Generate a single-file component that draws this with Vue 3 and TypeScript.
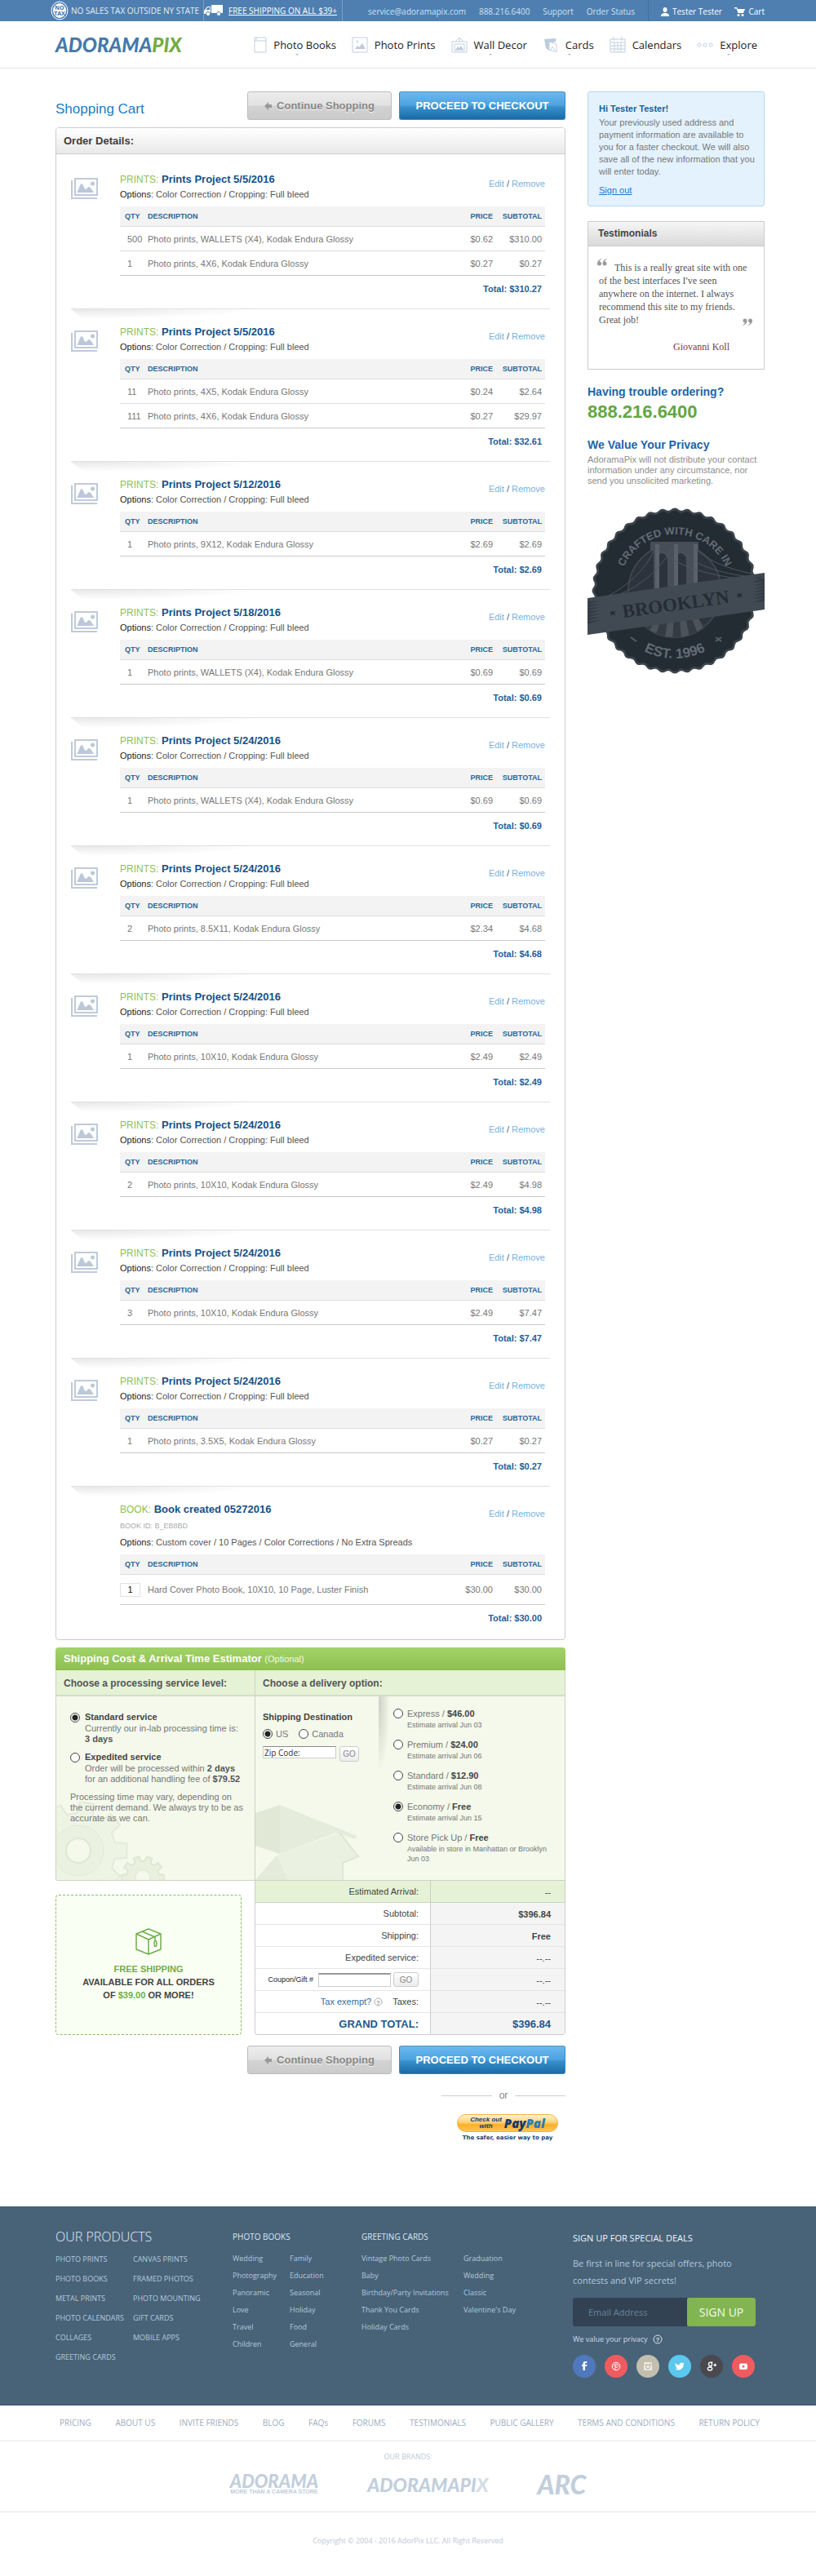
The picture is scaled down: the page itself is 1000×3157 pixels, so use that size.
<script setup lang="ts">
import { ref } from 'vue'

interface Row { qty: string; desc: string; price: string; sub: string }
interface Item { kind: string; title: string; id?: string; options: string; rows: Row[]; total: string }

const bleed = 'Color Correction / Cropping: Full bleed'
const print = (date: string, rows: [string, string, string, string][], total: string): Item => ({
  kind: 'PRINTS:',
  title: `Prints Project ${date}`,
  options: bleed,
  rows: rows.map(([qty, size, price, sub]) => ({ qty, desc: `Photo prints, ${size}, Kodak Endura Glossy`, price, sub })),
  total,
})

const items: Item[] = [
  print('5/5/2016', [['500', 'WALLETS (X4)', '$0.62', '$310.00'], ['1', '4X6', '$0.27', '$0.27']], '$310.27'),
  print('5/5/2016', [['11', '4X5', '$0.24', '$2.64'], ['111', '4X6', '$0.27', '$29.97']], '$32.61'),
  print('5/12/2016', [['1', '9X12', '$2.69', '$2.69']], '$2.69'),
  print('5/18/2016', [['1', 'WALLETS (X4)', '$0.69', '$0.69']], '$0.69'),
  print('5/24/2016', [['1', 'WALLETS (X4)', '$0.69', '$0.69']], '$0.69'),
  print('5/24/2016', [['2', '8.5X11', '$2.34', '$4.68']], '$4.68'),
  print('5/24/2016', [['1', '10X10', '$2.49', '$2.49']], '$2.49'),
  print('5/24/2016', [['2', '10X10', '$2.49', '$4.98']], '$4.98'),
  print('5/24/2016', [['3', '10X10', '$2.49', '$7.47']], '$7.47'),
  print('5/24/2016', [['1', '3.5X5', '$0.27', '$0.27']], '$0.27'),
  {
    kind: 'BOOK:',
    title: 'Book created 05272016',
    id: 'BOOK ID: B_EB8BD',
    options: 'Custom cover / 10 Pages / Color Corrections / No Extra Spreads',
    rows: [{ qty: '1', desc: 'Hard Cover Photo Book, 10X10, 10 Page, Luster Finish', price: '$30.00', sub: '$30.00' }],
    total: '$30.00',
  },
]

const delivery = [
  { name: 'Express', price: '$46.00', note: 'Estimate arrival Jun 03' },
  { name: 'Premium', price: '$24.00', note: 'Estimate arrival Jun 06' },
  { name: 'Standard', price: '$12.90', note: 'Estimate arrival Jun 08' },
  { name: 'Economy', price: 'Free', note: 'Estimate arrival Jun 15' },
  { name: 'Store Pick Up', price: 'Free', note: 'Available in store in Manhattan or Brooklyn Jun 03' },
]
const chosenDelivery = ref('Economy')
const service = ref('standard')
const country = ref('US')
const zip = ref('Zip Code:')
const coupon = ref('')
const email = ref('')

const products = [
  ['PHOTO PRINTS', 'PHOTO BOOKS', 'METAL PRINTS', 'PHOTO CALENDARS', 'COLLAGES', 'GREETING CARDS'],
  ['CANVAS PRINTS', 'FRAMED PHOTOS', 'PHOTO MOUNTING', 'GIFT CARDS', 'MOBILE APPS'],
]
const books = [
  ['Wedding', 'Photography', 'Panoramic', 'Love', 'Travel', 'Children'],
  ['Family', 'Education', 'Seasonal', 'Holiday', 'Food', 'General'],
]
const cards = [
  ['Vintage Photo Cards', 'Baby', 'Birthday/Party Invitations', 'Thank You Cards', 'Holiday Cards'],
  ['Graduation', 'Wedding', 'Classic', "Valentine's Day"],
]
const siteLinks = ['PRICING', 'ABOUT US', 'INVITE FRIENDS', 'BLOG', 'FAQs', 'FORUMS', 'TESTIMONIALS', 'PUBLIC GALLERY', 'TERMS AND CONDITIONS', 'RETURN POLICY']

/* Wavy outline of the round seal. */
function wavyCircle(cx: number, cy: number, r: number, depth: number, waves: number): string {
  const pts: string[] = []
  const steps = waves * 10
  for (let i = 0; i < steps; i++) {
    const a = (i / steps) * Math.PI * 2
    const rr = r + depth * Math.cos(a * waves)
    pts.push(`${(cx + rr * Math.cos(a)).toFixed(1)},${(cy + rr * Math.sin(a)).toFixed(1)}`)
  }
  return `M${pts.join('L')}Z`
}
const sealOuter = wavyCircle(107, 102, 100, 1.5, 40)
const sealInner = wavyCircle(107, 102, 97, 1.5, 40)

/* Toothed wheel outline. */
function gear(cx: number, cy: number, r: number, tooth: number, teeth: number): string {
  const pts: string[] = []
  for (let i = 0; i < teeth; i++) {
    const a = (i / teeth) * Math.PI * 2
    const w = Math.PI / teeth
    const marks: [number, number][] = [[-0.62, r], [-0.42, r + tooth], [0.42, r + tooth], [0.62, r]]
    for (const [k, rr] of marks) {
      pts.push(`${(cx + rr * Math.cos(a + k * w)).toFixed(1)},${(cy + rr * Math.sin(a + k * w)).toFixed(1)}`)
    }
  }
  return `M${pts.join('L')}Z`
}
const bigGear = gear(27, 60, 46, 14, 9)
const smallGear = gear(106, 93, 20, 6, 10)
</script>

<template>
  <div class="page">
    <div class="topbar">
      <div class="wrap topbar-in">
        <div class="promo-tax">
          <svg width="22" height="24" viewBox="0 0 22 24">
            <ellipse cx="11" cy="12" rx="10" ry="11" fill="none" stroke="#fff" stroke-width="1" />
            <ellipse cx="11" cy="12" rx="8" ry="9" fill="#fff" />
            <text x="11" y="11" class="tax">NO</text>
            <text x="11" y="18" class="tax">TAX</text>
          </svg>
          <span>NO SALES TAX OUTSIDE NY STATE</span>
        </div>
        <div class="promo-ship">
          <svg width="24" height="14" viewBox="0 0 24 14" fill="#fff">
            <path d="M9 0h14v10H9zM1 6l3-4h4v9H0V7z" />
            <path d="M2.500 6l2-3H7v3z" fill="#4e7fb0" />
            <circle cx="5" cy="11" r="2.500" stroke="#4e7fb0" /><circle cx="18" cy="11" r="2.500" stroke="#4e7fb0" />
          </svg>
          <a href="#">FREE SHIPPING ON ALL $39+</a>
        </div>
        <div class="contact">
          <a href="#">service@adoramapix.com</a><a href="#">888.216.6400</a><a href="#">Support</a><a href="#">Order Status</a>
        </div>
        <div class="account">
          <a href="#"><svg width="10" height="11" viewBox="0 0 10 11" fill="#fff"><ellipse cx="5" cy="3" rx="2.500" ry="3" /><path d="M0 11V9l3-2h4l3 2v2z" /></svg>Tester Tester</a>
          <a href="#"><svg width="13" height="11" viewBox="0 0 13 11" fill="#fff"><path d="M0 0h3l1 2h9l-2 5H4.500L2.500 1.500H0z" /><circle cx="5" cy="9.500" r="1.500" /><circle cx="10" cy="9.500" r="1.500" /></svg>Cart</a>
        </div>
      </div>
    </div>

    <header class="head">
      <div class="wrap head-in">
        <a href="#" class="logo">ADORAMA<span>PIX</span></a>
        <nav class="nav">
          <a href="#" class="drop"><svg class="ni nbook" viewBox="0 0 16 20"><path d="M1 1h14v18H1zM1 5h14M3 1v4" /></svg>Photo Books</a>
          <a href="#"><svg class="ni" viewBox="0 0 20 20"><path d="M1 1h18v18H1z" /><path d="M4 15l3-4 2 2 4-5 4 7z" fill="#bccbdd" stroke="none" /><circle cx="7" cy="6" r="1" /></svg>Photo Prints</a>
          <a href="#" class="drop"><svg class="ni" viewBox="0 0 20 20"><path d="M1 6h18v13H1zM4 9h12v8H4zM5 6l5-5 5 5M10 1v5" /><path d="M5 16l3-4 2 2 2-3 3 5z" fill="#bccbdd" stroke="none" /></svg>Wall Decor</a>
          <a href="#" class="drop"><svg class="ni" viewBox="0 0 20 20"><path d="M2 3l14-1v4L8 8v9l-4-3z" fill="#bccbdd" stroke="none" /><path d="M8 6l9 3v10l-9-3zM10 16l2-4 3 5" fill="#fff" /></svg>Cards</a>
          <a href="#"><svg class="ni" viewBox="0 0 20 20"><path d="M1 3h18v16H1zM1 7h18M1 11h18M1 15h18M6 7v12M10 7v12M14 7v12M5 0v5M15 0v5" /></svg>Calendars</a>
          <a href="#" class="drop"><svg class="ni" viewBox="0 0 20 20"><circle cx="3" cy="10" r="2" /><circle cx="10" cy="10" r="2" /><circle cx="17" cy="10" r="2" /></svg>Explore</a>
        </nav>
      </div>
    </header>

    <main class="wrap body">
      <div class="col-main">
        <div class="title-row">
          <h1>Shopping Cart</h1>
          <div class="actions">
            <button class="btn grey" type="button"><svg width="9" height="10" viewBox="0 0 9 10" fill="#999"><path d="M0 5l5-5v3h4v4H5v3z" /></svg>Continue Shopping</button>
            <button class="btn blue" type="button">PROCEED TO CHECKOUT</button>
          </div>
        </div>

        <section class="order">
          <h2>Order Details:</h2>
          <article v-for="(it, i) in items" :key="i" class="item" :class="{ first: i === 0 }">
            <div class="thumb">
              <svg v-if="!it.id" width="33" height="26" viewBox="0 0 33 26">
                <path d="M1 3v22h31" fill="none" stroke="#c0cada" stroke-width="2" />
                <rect x="5" y="1" width="27" height="20" fill="#fff" stroke="#c0cada" stroke-width="2" />
                <path d="M7 18c2-2 4-11 6-11s3 7 5 7 2-3 4-3 4 4 6 7z" fill="#bcc8d8" />
                <circle cx="26.500" cy="7" r="2.500" fill="#bcc8d8" />
              </svg>
            </div>
            <div class="detail">
              <div class="detail-head">
                <div>
                  <h3><span>{{ it.kind }}</span> {{ it.title }}</h3>
                  <p v-if="it.id" class="bid">{{ it.id }}</p>
                  <p class="opts"><b>Options</b>: {{ it.options }}</p>
                </div>
                <div class="links"><a href="#">Edit</a> / <a href="#">Remove</a></div>
              </div>
              <table class="lines">
                <thead><tr><th class="q">QTY</th><th>DESCRIPTION</th><th class="n">PRICE</th><th class="s">SUBTOTAL</th></tr></thead>
                <tbody>
                  <tr v-for="(r, j) in it.rows" :key="j" :class="{ tall: it.id }">
                    <td class="q"><input v-if="it.id" class="qty" :value="r.qty" aria-label="Quantity"><template v-else>{{ r.qty }}</template></td>
                    <td>{{ r.desc }}</td><td class="n">{{ r.price }}</td><td class="s">{{ r.sub }}</td>
                  </tr>
                </tbody>
              </table>
              <p class="total">Total: {{ it.total }}</p>
            </div>
          </article>
        </section>

        <section class="est">
          <h2>Shipping Cost &amp; Arrival Time Estimator <small>(Optional)</small></h2>
          <div class="est-grid">
            <div class="est-left">
              <h3>Choose a processing service level:</h3>
              <div class="svc">
                <svg class="deco" width="134" height="96" viewBox="0 0 134 96">
                  <path :d="bigGear" fill="#eef4e4" stroke="#e3eada" stroke-width="2" />
                  <circle cx="27" cy="60" r="31" fill="#eaf1e0" stroke="#e1e9d6" /><circle cx="27" cy="60" r="15" fill="#f4f9eb" stroke="#dfe7d4" stroke-width="2" />
                  <path :d="smallGear" fill="#e9f0de" stroke="#dfe7d4" stroke-width="2" /><circle cx="106" cy="93" r="9" fill="#f4f9eb" stroke="#dfe7d4" />
                </svg>
                <div class="choice">
                  <input id="std" v-model="service" type="radio" name="service" value="standard">
                  <div><label for="std">Standard service</label><p>Currently our in-lab processing time is:<br><b>3 days</b></p></div>
                </div>
                <div class="choice">
                  <input id="exp" v-model="service" type="radio" name="service" value="expedited">
                  <div><label for="exp">Expedited service</label><p>Order will be processed within <b>2 days</b><br>for an additional handling fee of <b>$79.52</b></p></div>
                </div>
                <p class="note">Processing time may vary, depending on<br>the current demand. We always try to be as<br>accurate as we can.</p>
              </div>
            </div>
            <div class="est-right">
              <h3>Choose a delivery option:</h3>
              <div class="del">
                <div class="dest">
                  <svg class="deco" width="128" height="92" viewBox="0 0 128 92">
                    <path d="M0 10L30 0l95 38-4 4-22-8-68 26L0 50z" fill="#e6ecdc" />
                    <path d="M0 10L30 0v60L0 50z" fill="#e1e8d6" />
                    <path d="M26 62l77-28 23 29-19 8v21H0z" fill="#ebf1e1" />
                    <path d="M103 34l23 29-19 8v21" fill="none" stroke="#dfe6d4" stroke-width="2" />
                    <path d="M26 62L0 92h40z" fill="#e5ebda" />
                  </svg>
                  <h4>Shipping Destination</h4>
                  <div class="ctry">
                    <label><input v-model="country" type="radio" name="country" value="US">US</label>
                    <label><input v-model="country" type="radio" name="country" value="Canada">Canada</label>
                  </div>
                  <div class="zip"><input v-model="zip" type="text" aria-label="Zip code"><button type="button" class="go">GO</button></div>
                </div>
                <div class="opts-list">
                  <div v-for="d in delivery" :key="d.name" class="dopt">
                    <input :id="'d-' + d.name" v-model="chosenDelivery" type="radio" name="delivery" :value="d.name">
                    <div><label :for="'d-' + d.name">{{ d.name }} / <b>{{ d.price }}</b></label><p>{{ d.note }}</p></div>
                  </div>
                </div>
              </div>
            </div>
          </div>
        </section>

        <div class="sum-row">
          <aside class="free">
            <svg width="32" height="33" viewBox="0 0 32 33" fill="none" stroke="#6fae4a" stroke-width="1.500" stroke-linejoin="round">
              <path d="M16 1l15 6v19l-15 6L1 26V7zM1 7l15 7 15-7M16 14v18M8 4l16 7v4" /><ellipse cx="24.500" cy="19" rx="1.500" ry="3.500" />
            </svg>
            <p><em>FREE SHIPPING</em><br>AVAILABLE FOR ALL ORDERS<br>OF <em>$39.00</em> OR MORE!</p>
          </aside>
          <table class="sum">
            <tbody>
              <tr class="arr"><th>Estimated Arrival:</th><td>--</td></tr>
              <tr><th>Subtotal:</th><td><b>$396.84</b></td></tr>
              <tr><th>Shipping:</th><td><b>Free</b></td></tr>
              <tr><th>Expedited service:</th><td>--.--</td></tr>
              <tr><th><div class="coupon"><label for="coupon">Coupon/Gift #</label><input id="coupon" v-model="coupon" type="text"><button type="button" class="go">GO</button></div></th><td>--.--</td></tr>
              <tr><th><div class="tax-row"><a href="#">Tax exempt?</a><svg width="11" height="11" viewBox="0 0 11 11"><circle cx="5.500" cy="5.500" r="4.500" fill="none" stroke="#aaa" /><text x="5.500" y="8.500" class="qm">?</text></svg><span>Taxes:</span></div></th><td>--.--</td></tr>
              <tr class="grand"><th>GRAND TOTAL:</th><td>$396.84</td></tr>
            </tbody>
          </table>
        </div>

        <div class="actions bottom">
          <button class="btn grey" type="button"><svg width="9" height="10" viewBox="0 0 9 10" fill="#999"><path d="M0 5l5-5v3h4v4H5v3z" /></svg>Continue Shopping</button>
          <button class="btn blue" type="button">PROCEED TO CHECKOUT</button>
        </div>
        <div class="or"><span>or</span></div>
        <div class="pp">
          <button type="button"><span class="co">Check out<br>with</span><span class="pal"><i>Pay</i><i class="l">Pal</i></span></button>
          <small>The safer, easier way to pay</small>
        </div>
      </div>

      <aside class="side">
        <section class="hello">
          <h3>Hi Tester Tester!</h3>
          <p>Your previously used address and payment information are available to you for a faster checkout. We will also save all of the new information that you will enter today.</p>
          <a href="#">Sign out</a>
        </section>
        <section class="testi">
          <h3>Testimonials</h3>
          <blockquote>
            <svg class="lq" width="12" height="9" viewBox="0 0 12 9"><path d="M5 0C2 1 0 3 0 6a2.500 2.500 0 1 0 2.500-2.500C3 2 4 1 5.300.7zM11.500 0c-3 1-5 3-5 6A2.500 2.500 0 1 0 9 3.500c.5-1.500 1.500-2.500 2.800-2.800z" /></svg>
            This is a really great site with one of the best interfaces I've seen anywhere on the internet. I always recommend this site to my friends. Great job!
            <svg class="rq" width="12" height="9" viewBox="0 0 12 9"><path d="M.5 9c3-1 5-3 5-6A2.500 2.500 0 1 0 3 5.500C2.500 7 1.500 8 .2 8.300zM7 9c3-1 5-3 5-6a2.500 2.500 0 1 0-2.500 2.500C9 7 8 8 6.700 8.300z" /></svg>
          </blockquote>
          <cite>Giovanni Koll</cite>
        </section>
        <h3 class="sh">Having trouble ordering?</h3>
        <p class="phone">888.216.6400</p>
        <h3 class="sh">We Value Your Privacy</h3>
        <p class="priv">AdoramaPix will not distribute your contact information under any circumstance, nor send you unsolicited marketing.</p>
        <svg class="seal" viewBox="0 0 217 204">
          <defs>
            <path id="arcTop" d="M38 102a69 69 0 0 1 138 0" />
            <path id="arcBot" d="M24 102a83 83 0 0 0 166 0" />
            <clipPath id="disc"><circle cx="107" cy="102" r="57" /></clipPath>
          </defs>
          <path :d="sealOuter" fill="#3c444c" /><path :d="sealInner" fill="#232b33" />
          <circle cx="107" cy="102" r="57" fill="#2c333c" stroke="#3d454e" stroke-width="2" />
          <g clip-path="url(#disc)">
            <path d="M48 160l34-26h50l34 26z" fill="#343b43" />
            <path d="M84 134l-14 30h11l10-30zM99 134l-5 30h10l2-30zM113 134l2 30h11l-6-30zM127 134l12 30h11l-15-30z" fill="#4d535a" />
          </g>
          <path d="M77 42h59v11h-3v52h-12V66c0-7-3-10-7-10s-7 4-7 10v39H98V66c0-7-3-10-7-10s-6 4-6 10v39h-4V53h-4z" fill="#474e57" />
          <path d="M83 45h5v60h-5zM106 45h5v60h-5zM130 45h5v60h-5z" fill="#59616a" />
          <path d="M86 49c20 22 60 35 117 40M109 49c18 20 52 32 92 36M131 49c18 18 42 26 70 32M82 52C70 78 48 96 26 108M104 50C84 82 62 98 30 110" fill="none" stroke="#4e565f" />
          <text class="arc"><textPath href="#arcTop" startOffset="50%">CRAFTED WITH CARE IN</textPath></text>
          <text class="arc year"><textPath href="#arcBot" startOffset="50%">EST. 1996</textPath></text>
          <path d="M53 159l7 5M164 164l-7 -5M164 159l-7 5" stroke="#565f69" stroke-width="2" stroke-dasharray="9 9 0 9" />
          <path d="M0 111L217 80v45L0 156z" fill="#414a53" />
          <path d="M0 115l16-1-16 5 16-1-16 5 16-1-16 5 16-1-16 5 16-1-16 5 16-1-16 5 16-1-16 5zM217 87l-14 0 14-4-14 9 14-1-14 5 14-1-14 5 14-1-14 5 14-1-14 5 14-1-14 5 14-1-14 5 14-1z" fill="#343c45" />
          <g transform="rotate(-8 108 118)">
            <text x="108" y="126" class="bk">BROOKLYN</text>
            <path d="M30 115l1 2 3 0-2 2 1 3-3-2-3 2 1-3-2-2 3 0zM187 115l1 2 3 0-2 2 1 3-3-2-3 2 1-3-2-2 3 0z" fill="#252c34" />
          </g>
        </svg>
      </aside>
    </main>

    <footer>
      <div class="foot">
        <div class="wrap foot-in">
          <section class="f-prod">
            <h3>OUR PRODUCTS</h3>
            <div class="lists"><ul v-for="(c, i) in products" :key="i"><li v-for="l in c" :key="l"><a href="#">{{ l }}</a></li></ul></div>
          </section>
          <section class="f-book">
            <h3>PHOTO BOOKS</h3>
            <div class="lists"><ul v-for="(c, i) in books" :key="i"><li v-for="l in c" :key="l"><a href="#">{{ l }}</a></li></ul></div>
          </section>
          <section class="f-card">
            <h3>GREETING CARDS</h3>
            <div class="lists"><ul v-for="(c, i) in cards" :key="i"><li v-for="l in c" :key="l"><a href="#">{{ l }}</a></li></ul></div>
          </section>
          <section class="f-sign">
            <h3>SIGN UP FOR SPECIAL DEALS</h3>
            <p>Be first in line for special offers, photo<br>contests and VIP secrets!</p>
            <form @submit.prevent><input v-model="email" type="email" placeholder="Email Address" aria-label="Email Address"><button type="submit">SIGN UP</button></form>
            <div class="fp">We value your privacy <svg width="12" height="12" viewBox="0 0 12 12"><circle cx="6" cy="6" r="5" fill="none" stroke="#dbe6f0" /><text x="6" y="9" class="qm lite">?</text></svg></div>
            <div class="soc">
              <a href="#" aria-label="Facebook" class="fb"><svg viewBox="0 0 28 28"><path d="M15 19v-5h2l.5-2H15v-1.200c0-.6.3-.8.9-.8h1.400V8h-2c-2 0-2.800 1.200-2.800 2.800V12H11v2h1.500v5z" fill="#fff" /></svg></a>
              <a href="#" aria-label="Pinterest" class="pi"><svg viewBox="0 0 28 28" fill="none" stroke="#fff"><circle cx="14" cy="14" r="4.800" /><path d="M12.500 18l1.500-6M12 14.500c-1-2.500.8-3.700 2.300-3.500 2 .2 2.500 2 1.700 3.600-.7 1.400-2 1.300-2.500.4" /></svg></a>
              <a href="#" aria-label="Instagram" class="ig"><svg viewBox="0 0 28 28"><rect x="9" y="9" width="10" height="10" rx="1" fill="#eeece2" /><circle cx="14" cy="14.500" r="2.500" fill="none" stroke="#c2bfae" stroke-width="1.300" /><path d="M9 12h3M16 12h3M16.500 10.500h1.500" stroke="#c2bfae" /></svg></a>
              <a href="#" aria-label="Twitter" class="tw"><svg viewBox="0 0 28 28"><path d="M8.500 10c1.500 1.700 3.200 2.400 5.300 2.500-.4-2.600 2.500-4 4.200-2.300l1.600-.6-1 1.300 1.200-.2-1.200 1.200c0 5.500-5.600 8.200-10.200 5.700 1.300 0 2.300-.3 3.100-1-1 0-1.700-.6-2-1.500h.8c-1-.4-1.600-1.200-1.600-2.200l.9.200c-1-.8-1.500-2-1.100-3.100z" fill="#fff" /></svg></a>
              <a href="#" aria-label="Google Plus" class="gp"><svg viewBox="0 0 28 28" fill="none" stroke="#fff" stroke-width="1.300"><ellipse cx="12.500" cy="11.500" rx="2" ry="2.300" /><path d="M13 9.200h2.500M12.500 13.800l1.500 1.400" /><ellipse cx="12" cy="17" rx="2.700" ry="2" /><path d="M16.500 12.500h3.500M18.200 10.800v3.400" /></svg></a>
              <a href="#" aria-label="YouTube" class="yt"><svg viewBox="0 0 28 28"><rect x="9" y="10.500" width="10" height="7.500" rx="2" fill="#fff" /><path d="M12.800 12.300l3.200 2-3.200 2z" fill="#f05b5f" /></svg></a>
            </div>
          </section>
        </div>
      </div>
      <nav class="site"><a v-for="l in siteLinks" :key="l" href="#">{{ l }}</a></nav>
      <div class="brands">
        <p>OUR BRANDS:</p>
        <div class="blogos">
          <div class="b1">ADORAMA<small>MORE THAN A CAMERA STORE</small></div>
          <div class="b2">ADORAMAPI<span>X</span></div>
          <div class="b3">ARC</div>
        </div>
      </div>
      <p class="copy">Copyright © 2004 - 2016 AdorPix LLC. All Right Reserved</p>
    </footer>
  </div>
</template>

<style>
body { margin: 0; background: #fff; }
</style>

<style scoped>
.page { font-family: "Liberation Sans", Arial, sans-serif; font-size: 11px; color: #777; }
h1, h2, h3, h4, p, ul, blockquote { margin: 0; padding: 0; }
ul { list-style: none; }
a { text-decoration: none; color: inherit; }
button, input { font-family: inherit; box-sizing: border-box; margin: 0; }
button { cursor: pointer; padding: 0; }
svg { display: block; flex: none; }
.wrap { max-width: 869px; margin: 0 auto; padding: 0 63px 0 68px; }

.topbar { background: #4e7fb0; color: #cfe0f0; font: 10px/26px "Open Sans", "Noto Sans", sans-serif; }
.topbar-in { display: flex; height: 26px; }
.promo-tax, .promo-ship, .account a { display: flex; align-items: center; }
.promo-tax { gap: 3px; margin-left: -6px; width: 187px; border-right: 1px solid #7ba0c6; color: #e4eef7; white-space: nowrap; }
.promo-ship { gap: 6px; width: 169px; border-right: 1px solid #7ba0c6; color: #fff; }
.promo-ship a { text-decoration: underline; line-height: 14px; }
.tax { font: bold 7px "Open Sans", sans-serif; fill: #3c6f9f; text-anchor: middle; }
.contact { flex: 1; display: flex; justify-content: space-between; padding: 2px 16px 0 31px; border-right: 1px solid #416f9e; line-height: 24px; }
.account { display: flex; justify-content: space-between; width: 127px; padding: 2px 0 0 15px; color: #fff; line-height: 24px; }
.account a { gap: 4px; }

.head { border-bottom: 1px solid #e4e4e4; }
.head-in { display: flex; justify-content: space-between; align-items: center; height: 57px; }
.logo, .b1, .b2, .b3 { font: italic 900 24px/24px Lato, sans-serif; color: #4479ab; }
.logo span { color: #74ab45; }
.nav { display: flex; gap: 19px; margin-right: 9px; font: 13px/20px "Open Sans", "Noto Sans", sans-serif; color: #222; }
.nav a { display: flex; align-items: center; gap: 8px; position: relative; }
.nav .drop::after { content: ""; position: absolute; left: 50%; bottom: -5px; border: 2px solid transparent; border-top-color: #a9b9cf; }
.ni { width: 20px; height: 20px; fill: none; stroke: #c3d0e0; }
.nbook { width: 16px; }

.body { display: flex; align-items: flex-start; gap: 27px; padding-top: 28px; }
.col-main { flex: 1; min-width: 0; }
.side { width: 217px; }
.title-row { display: flex; justify-content: space-between; align-items: center; margin-bottom: 9px; }
h1 { font-size: 17px; font-weight: normal; line-height: 20px; padding-top: 8px; color: #1681c5; }
.actions { display: flex; justify-content: flex-end; gap: 9px; }
.btn { height: 35px; border-radius: 3px; font-size: 13px; font-weight: bold; display: flex; align-items: center; justify-content: center; gap: 6px; }
.grey { width: 177px; color: #868686; text-shadow: 0 1px 0 #fff; border: 1px solid #bdbdbd; background: linear-gradient(#ececec, #e2e2e2 48%, #d3d3d3 52%, #cbcbcb); }
.blue { width: 204px; color: #fff; border: 1px solid #3b8cc4; border-top-color: #5192bd; background: linear-gradient(#6bb8ef, #4da3e0 48%, #3790cb 55%, #1a6aa6); }

.order { border: 1px solid #ccc; border-radius: 4px; padding-bottom: 2px; }
.order h2 { height: 31px; line-height: 31px; padding-left: 9px; font-size: 13px; color: #3e3e3e; background: linear-gradient(#fff, #e9e9e9); border-bottom: 1px solid #ccc; border-radius: 3px 3px 0 0; }
.item { position: relative; display: flex; margin: 0 18px; padding: 19px 6px 0 0; border-top: 1px solid #e0e0e0; }
.item.first { border-top-color: transparent; margin-top: 2px; }
.item:not(.first)::before { content: ""; position: absolute; left: 0; top: 0; width: 50%; height: 14px; background: radial-gradient(ellipse 200px 12px at 28px 0, rgba(0, 0, 0, .09), transparent); clip-path: polygon(0 0, 100% 0, 100% 100%, 18px 100%); }
.thumb { width: 60px; padding-top: 7px; box-sizing: border-box; }
.detail { flex: 1; }
.detail-head { display: flex; justify-content: space-between; padding-bottom: 6px; }
h3 { font-size: 13px; }
.item h3 { line-height: 18px; color: #14508a; }
.item h3 span { font-size: 12px; font-weight: normal; color: #8cc152; }
.bid { font-size: 9px; line-height: 22px; color: #aaa; }
.opts { line-height: 18px; color: #555; }
.opts b { font-weight: normal; color: #222; }
.links { padding-top: 6px; line-height: 16px; color: #3d5f7a; }
.links a { color: #76b3dc; }
.lines { width: 100%; border-spacing: 0; }
.lines th { height: 24px; padding: 0; background: #f3f3f3; border-bottom: 1px solid #ddd; font-size: 9px; color: #2a659b; text-align: left; }
.lines td { height: 29px; padding: 0; border-bottom: 1px solid #ddd; color: #777; }
.lines .tall td { height: 36px; }
.lines tr:last-child td { border-color: #c9c9c9; }
.lines .q { width: 25px; padding-left: 9px; }
.lines th.q { padding-left: 6px; width: 28px; }
.lines .n { width: 60px; text-align: right; }
.lines .s { width: 60px; padding-right: 4px; text-align: right; }
.qty { width: 25px; height: 17px; margin-left: -9px; padding: 0; border: 1px solid #e2e2e2; text-align: center; font-size: 11px; color: #111; display: block; }
.total { height: 40px; line-height: 33px; padding-right: 4px; text-align: right; font-weight: bold; font-size: 11px; color: #1f5f98; }

.est { margin-top: 9px; color: #777; }
.est h2 { height: 28px; line-height: 28px; padding-left: 10px; border-radius: 4px 4px 0 0; font-size: 13px; color: #fff; background: linear-gradient(#a2d368, #8fbf51); }
.est small { font-size: 11px; font-weight: normal; color: #f1fbe0; }
.est-grid { display: grid; grid-template-columns: 244px 1fr; background: #f4f9eb; border: solid #ccd3c4; border-width: 0 1px 1px; border-bottom-left-radius: 3px; }
.est-left, .est-right { display: flex; flex-direction: column; }
.est-left { border-right: 1px solid #ccd3c4; }
.est-grid h3 { height: 30px; line-height: 32px; padding-left: 9px; font-size: 12px; color: #555; background: #e5f2d5; border-bottom: 2px solid #d5ddcc; }
.svc { position: relative; flex: 1; padding: 18px 0 0 17px; line-height: 13px; }
.svc > :not(.deco), .dest > :not(.deco) { position: relative; }
.deco { position: absolute; left: 0; bottom: 0; }
.svc b { color: #555; }
.choice { display: flex; gap: 6px; margin-bottom: 8px; }
.choice label { display: block; line-height: 15px; font-weight: bold; color: #444; }
.note { margin-top: 9px; }
input[type="radio"] { appearance: none; flex: none; width: 12px; height: 12px; margin: 2px 0 0; border: 1px solid #444; border-radius: 50%; background: #fff; }
input[type="radio"]:checked { background: radial-gradient(#222 0 3px, #fff 4px); }
.del { display: flex; flex: 1; }
.dest { position: relative; width: 142px; padding: 17px 0 0 9px; }
.dest h4 { font-size: 11px; line-height: 16px; color: #444; }
.ctry { display: flex; gap: 13px; margin: 5px 0 7px; line-height: 16px; }
.ctry label { display: flex; gap: 4px; }
.zip { display: flex; gap: 4px; align-items: flex-start; }
.zip input { width: 90px; height: 15px; padding: 0 1px; border: 1px solid #ccc; border-top: 1px solid #888; font: 10px/12px "Open Sans", sans-serif; color: #333; }
.go { width: 24px; height: 19px; border: 1px solid #ccc; border-radius: 3px; background: linear-gradient(#fff, #ececec); font-size: 10px; color: #888; }
.opts-list { position: relative; flex: 1; padding: 13px 16px 20px 18px; }
.opts-list::before { content: ""; position: absolute; left: 0; top: 0; width: 14px; height: 88px; background: radial-gradient(ellipse 14px 84px at 0 10px, rgba(0, 0, 0, .16), transparent); }
.dopt { display: flex; gap: 5px; margin-bottom: 10px; color: #777; }
.dopt:last-child { margin-bottom: 0; }
.dopt label { display: block; line-height: 16px; }
.dopt b { color: #444; }
.dopt p { font-size: 9px; line-height: 12px; }

.sum-row { display: flex; justify-content: space-between; }
.free { width: 226px; margin-top: 17px; border: 1px dashed #8cba6c; border-radius: 4px; background: #fafff3; display: flex; flex-direction: column; align-items: center; justify-content: center; gap: 9px; text-align: center; font-weight: bold; line-height: 16px; color: #444; }
.free em { font-style: normal; color: #72ad4c; }
.sum { width: 381px; border-spacing: 0; border: solid #ccc; border-width: 0 1px 1px; border-radius: 0 0 4px 4px; color: #555; }
.sum th, .sum td { height: 26px; padding: 0 17px 0 0; text-align: right; font-weight: normal; border-bottom: 1px solid #e5e5e5; }
.sum th { padding-right: 14px; color: #444; }
.sum td { width: 147px; border-left: 1px solid #ccc; background: #f4f4f4; color: #444; padding-top: 2px; height: 24px; }
.sum .arr th, .sum .arr td { background: #e5f2d5; border-bottom-color: #ccd3c4; }
.sum .grand th, .sum .grand td { font-size: 13px; font-weight: bold; color: #22578a; border-bottom: 0; padding-top: 0; height: 26px; }
.coupon, .tax-row { display: flex; justify-content: flex-end; align-items: center; }
.coupon { gap: 3px; }
.coupon label { font-size: 9px; margin-right: 3px; color: #222; }
.coupon input { width: 89px; height: 17px; border: 1px solid #ccc; border-top: 2px solid #999; padding: 0 2px; font-size: 10px; }
.coupon .go { width: 31px; height: 18px; }
.tax-row { gap: 3px; }
.tax-row a { color: #2f6fa8; }
.tax-row span { margin-left: 9px; }
.qm { font: bold 8px "Liberation Sans", sans-serif; fill: #999; text-anchor: middle; }
.lite { fill: #dbe6f0; }
.bottom { margin-top: 13px; }
.or { display: flex; align-items: center; gap: 9px; width: 152px; margin: 18px 0 0 auto; line-height: 16px; font-size: 12px; color: #888; }
.or::before, .or::after { content: ""; flex: 1; border-top: 1px solid #ccc; }
.pp { width: 124px; margin: 15px 9px 0 auto; text-align: center; color: #1d4573; }
.pp button { display: flex; align-items: center; justify-content: center; gap: 3px; width: 124px; height: 22px; border: 1px solid #f2b344; border-radius: 11px; background: linear-gradient(#fff3cf, #fdd27a 45%, #fbaf25 60%, #fdc55a); color: #16396b; font-style: italic; font-weight: bold; }
.co { font-size: 8px; line-height: 8px; }
.pal { font: italic 900 15px/18px "Open Sans", sans-serif; }
.pal .l { color: #2a7ab8; }
.pp small { display: block; font: bold 7px/14px "DejaVu Sans", sans-serif; white-space: nowrap; }

.hello { border: 1px solid #b7d7ee; border-radius: 3px; background: #e4f2fe; padding: 12px 10px 11px 13px; }
.hello h3 { font-size: 11px; line-height: 16px; margin-bottom: 2px; color: #14609c; }
.hello p { line-height: 15px; color: #777; margin-bottom: 7px; }
.hello a { display: block; line-height: 16px; color: #1b77cc; text-decoration: underline; }
.testi { margin-top: 18px; border: 1px solid #ccc; padding-bottom: 18px; }
.testi h3 { height: 29px; line-height: 29px; padding-left: 12px; font-size: 12px; color: #444; background: linear-gradient(#f6f6f6, #d9d9d9); border-bottom: 1px solid #ccc; }
blockquote { position: relative; padding: 18px 10px 0 13px; font: 12px/16px "Liberation Serif", serif; color: #555; text-indent: 19px; }
.lq, .rq { position: absolute; fill: #999; }
.lq { left: 11px; top: 15px; }
.rq { right: 14px; bottom: 1px; }
cite { display: block; margin: 16px 42px 0 0; text-align: right; font: 12px/18px "Liberation Serif", serif; color: #80383f; }
.sh { font-size: 14px; line-height: 18px; color: #1c66a8; margin-top: 18px; }
.phone { font-size: 22px; line-height: 26px; font-weight: bold; color: #62a744; margin: 3px 0 0; }
.priv { line-height: 13px; color: #8e8e8e; margin-top: 3px; }
.seal { width: 217px; height: 204px; margin-top: 26px; }
.arc { font: bold 13px "Liberation Sans", sans-serif; fill: #626b75; text-anchor: middle; }
.arc.year { font-size: 17px; }
.bk { font: bold 23px "Liberation Serif", serif; fill: #252c34; text-anchor: middle; }

footer { margin-top: 77px; font-family: "Open Sans", "Noto Sans", sans-serif; }
.foot { background: #486278; border-bottom: 1px solid #3b4f6b; color: #b4c8dc; }
.foot-in { display: grid; grid-template-columns: 217px 158px 259px 1fr; padding-top: 25px; padding-bottom: 33px; }
.foot h3 { font-size: 10px; font-weight: normal; line-height: 24px; color: #d9e6f2; margin-bottom: 4px; }
.foot .f-prod h3 { font-size: 16px; font-weight: 300; color: #e4eef7; }
.foot .f-sign h3 { font-size: 11px; color: #eef5fb; margin: 2px 0 8px; }
.lists { display: flex; font-size: 9px; line-height: 21px; }
.f-prod .lists { line-height: 24px; }
.f-prod ul:first-child { width: 95px; }
.f-book ul:first-child { width: 70px; }
.f-card ul:first-child { width: 125px; }
.f-sign p { font-size: 11px; line-height: 21px; }
form { display: flex; margin-top: 11px; width: 224px; height: 35px; }
form input { flex: 1; min-width: 0; border: 0; border-radius: 3px 0 0 3px; background: #324253; padding: 0 0 0 19px; font-size: 11px; color: #d9e6f2; }
form input::placeholder { color: #6b8298; }
form button { width: 84px; border: 0; border-radius: 3px; background: #82b551; color: #f3fbe9; font-size: 14px; }
.fp { display: flex; align-items: center; gap: 6px; margin: 8px 0 11px; font-size: 9px; line-height: 16px; color: #cddbe8; }
.soc { display: flex; gap: 11px; }
.soc a { width: 28px; height: 28px; border-radius: 50%; }
.fb { background: #5079bd; } .pi { background: #f05b5f; } .ig { background: #c2bfae; } .tw { background: #5bc8ee; } .gp { background: #4a494f; } .yt { background: #f05b5f; }
.site { display: flex; justify-content: space-between; max-width: 858px; margin: 0 auto; padding: 0 69px 0 73px; font-size: 10px; line-height: 43px; color: #9dacbe; }
.brands { border: solid #e6e6e6; border-width: 1px 0; height: 86px; text-align: center; color: #c0cad8; }
.brands p { padding-top: 12px; font-size: 9px; line-height: 14px; }
.blogos { display: flex; justify-content: center; align-items: center; gap: 60px; margin-top: 13px; height: 28px; }
.b1, .b2, .b3 { color: #c2cedc; }
.b1 { font-size: 22px; line-height: 18px; }
.b1 small { display: block; font: bold 7px/8px "Liberation Sans", sans-serif; }
.b2 { font-size: 23px; }
.b2 span { color: #d5dee8; }
.b3 { font-size: 32px; }
.copy { padding: 28px 0 36px; font-size: 9px; line-height: 14px; text-align: center; color: #c0c8d6; }
</style>
